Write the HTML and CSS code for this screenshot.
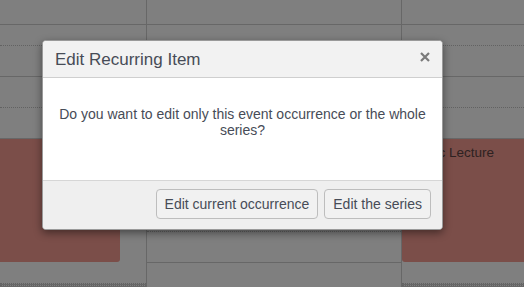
FILE: index.html
```html
<!DOCTYPE html>
<html lang="en">
<head>
  <meta charset="UTF-8">
  <title>Edit Recurring Item</title>
  <link rel="stylesheet" href="styles.css">
</head>
<body>

  <div class="calendar">
    <div class="day-col">
      <div class="slot"></div><div class="slot minor"></div><div class="slot"></div><div class="slot minor"></div><div class="slot"></div>
      <div class="slot minor"></div><div class="slot"></div><div class="slot minor"></div><div class="slot"></div><div class="slot last"></div>
      <div class="event event-left"></div>
    </div>
    <div class="day-col">
      <div class="slot"></div><div class="slot minor"></div><div class="slot"></div><div class="slot minor"></div><div class="slot"></div>
      <div class="slot minor"></div><div class="slot"></div><div class="slot minor"></div><div class="slot"></div><div class="slot last"></div>
    </div>
    <div class="day-col">
      <div class="slot"></div><div class="slot minor"></div><div class="slot"></div><div class="slot minor"></div><div class="slot"></div>
      <div class="slot minor"></div><div class="slot"></div><div class="slot minor"></div><div class="slot"></div><div class="slot last"></div>
      <div class="event event-right">Music Lecture</div>
    </div>
  </div>

  <div class="backdrop"></div>

  <div class="modal">
    <div class="modal-header">
      <h4 class="modal-title">Edit Recurring Item</h4>
      <button class="close" aria-label="Close">
        <svg width="10" height="10" viewBox="0 0 10 10">
          <path d="M1 1 L9 9 M9 1 L1 9" stroke="#7a7a7a" stroke-width="2.2" fill="none"/>
        </svg>
      </button>
    </div>
    <div class="modal-body">
      <p>Do you want to edit only this event occurrence or the whole series?</p>
    </div>
    <div class="modal-footer">
      <button class="btn">Edit current occurrence</button>
      <button class="btn">Edit the series</button>
    </div>
  </div>

</body>
</html>
```

FILE: styles.css
```css
body {
  margin: 0;
  font-family: 'Liberation Sans', Arial, sans-serif;
  background: #fff;
  overflow: hidden;
  height: 287px;
  position: relative;
}

.calendar {
  display: flex;
  height: 287px;
}

.day-col {
  display: grid;
  grid-template-rows: 25px 21px 31px 31px 31px 31px 31px 31px 31px 1fr;
  border-right: 1px solid #cecece;
}

.day-col:nth-child(1) {
  width: 146px;
}

.day-col:nth-child(2) {
  width: 254px;
}

.day-col:nth-child(3) {
  flex: 1;
  border-right: none;
}

.slot {
  grid-column: 1;
  border-bottom: 1px solid #cecece;
}

.slot.minor {
  border-bottom: 1px dotted #c4c4c4;
}

.slot.last {
  border-bottom: none;
}

.event {
  box-sizing: border-box;
  grid-column: 1;
  grid-row: 6 / 10;
  margin-bottom: 1px;
  background: #f69c92;
  color: #5c4444;
  font-size: 13.5px;
  line-height: 18px;
  padding: 5px 3px;
  white-space: nowrap;
  overflow: hidden;
}

.event-left {
  width: 120px;
  border-radius: 0 3px 3px 0;
}

.event-right {
  padding-left: 8px;
  border-radius: 3px 0 0 3px;
}

.backdrop {
  position: absolute;
  inset: 0;
  background: rgba(0, 0, 0, 0.5);
}

.modal {
  position: absolute;
  left: 42px;
  top: 40px;
  width: 399px;
  background: #fff;
  border: 1px solid #9a9a9a;
  border-radius: 4px;
  box-shadow: 0 3px 9px rgba(0, 0, 0, 0.45);
  overflow: hidden;
  color: #474c57;
}

.modal-header {
  display: flex;
  align-items: flex-start;
  justify-content: space-between;
  background: #f2f2f2;
  border-bottom: 1px solid #cfcfcf;
  padding: 9px 12px 7px 12px;
}

.modal-title {
  margin: 0;
  font-size: 17px;
  font-weight: normal;
  line-height: 20px;
}

.close {
  border: none;
  background: none;
  padding: 0;
  margin: 2px 0 0 0;
  width: 10px;
  height: 10px;
  line-height: 0;
  cursor: pointer;
}

.modal-body {
  padding: 28px 15px 42px;
  text-align: center;
}

.modal-body p {
  margin: 0;
  font-size: 14px;
  line-height: 16px;
}

.modal-footer {
  display: flex;
  justify-content: flex-end;
  gap: 6px;
  background: #efefef;
  border-top: 1px solid #d6d6d6;
  padding: 8px 11px 10px;
}

.btn {
  font-family: inherit;
  font-size: 14px;
  line-height: 18px;
  color: #474c57;
  padding: 5px 8px;
  background: #f1f1f1;
  border: 1px solid #bdbdbd;
  border-radius: 4px;
  cursor: pointer;
}
```
